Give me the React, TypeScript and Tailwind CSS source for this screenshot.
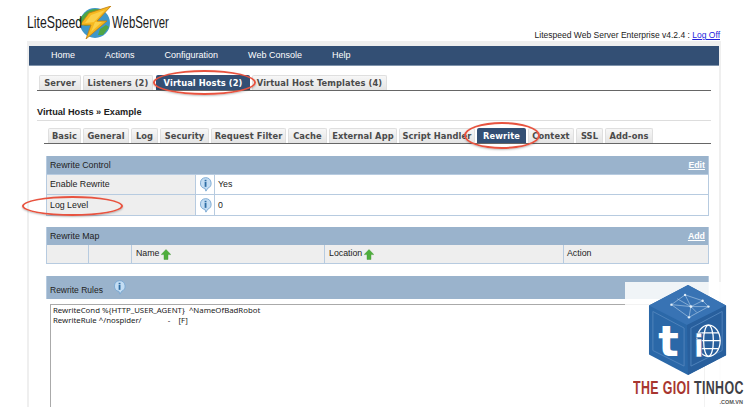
const sans = "font-['Liberation_Sans',Arial,sans-serif]";

const topTabs = [
  { label: "Server", w: "w-[42px]", ml: "ml-0" },
  { label: "Listeners (2)", w: "w-[70px]", ml: "ml-[2px]" },
  { label: "Virtual Hosts (2)", w: "w-[94px]", ml: "ml-[3px]", active: true },
  { label: "Virtual Host Templates (4)", w: "w-[135px]", ml: "ml-[2px]" },
];

const subTabs = [
  { label: "Basic", w: "w-[33px]", ml: "ml-0" },
  { label: "General", w: "w-[46px]", ml: "ml-[2px]" },
  { label: "Log", w: "w-[27px]", ml: "ml-[2px]" },
  { label: "Security", w: "w-[49px]", ml: "ml-[2px]" },
  { label: "Request Filter", w: "w-[75px]", ml: "ml-[2px]" },
  { label: "Cache", w: "w-[39px]", ml: "ml-[2px]" },
  { label: "External App", w: "w-[68px]", ml: "ml-[2px]" },
  { label: "Script Handler", w: "w-[76px]", ml: "ml-[2px]" },
  { label: "Rewrite", w: "w-[49px]", ml: "ml-[2px]", active: true },
  { label: "Context", w: "w-[46px]", ml: "ml-[2px]" },
  { label: "SSL", w: "w-[27px]", ml: "ml-[2px]" },
  { label: "Add-ons", w: "w-[48px]", ml: "ml-[2px]" },
];

function Tab({ label, w, ml, active }: { label: string; w: string; ml: string; active?: boolean }) {
  return (
    <div
      className={`${w} ${ml} h-[15px] shrink-0 flex items-center justify-center whitespace-nowrap rounded-t-[2px] pt-[1px] font-['DejaVu_Sans',sans-serif] text-[8.3px] font-bold tracking-[0.1px] ${
        active
          ? "bg-[#334f74] text-white"
          : "border border-b-0 border-[#dfdfdf] bg-gradient-to-b from-[#f7f7f7] to-[#e4e4e4] text-[#4a4a4a]"
      }`}
    >
      {label}
    </div>
  );
}

function InfoIcon() {
  return (
    <svg width="13" height="15" viewBox="0 0 12 14" className="shrink-0">
      <path d="M6 .6a5.2 5.2 0 0 1 2 10l-1.6 2.6-.9-2.5A5.1 5.1 0 0 1 6 .6z" fill="#c4ddf3" stroke="#7aa9d3" strokeWidth=".9" />
      <rect x="5.2" y="4.6" width="1.7" height="4.6" fill="#2f6ea5" />
      <rect x="5.2" y="2.6" width="1.7" height="1.4" fill="#2f6ea5" />
    </svg>
  );
}

function UpArrow() {
  return (
    <svg width="10" height="11" viewBox="0 0 10 11" className="shrink-0">
      <path d="M5 .5 9.8 5.6H7V10.5H3V5.6H.2z" fill="#4fae3c" stroke="#3d9430" strokeWidth=".4" />
    </svg>
  );
}

function SectionHeader({ title, action, h }: { title: string; action?: string; h: string }) {
  return (
    <div className={`${h} flex items-center justify-between bg-[#9ab3cc] pl-[3px] pr-[3px] pt-[1px] text-[8.8px] text-[#222]`}>
      <span>{title}</span>
      {action && <span className="font-bold text-white underline">{action}</span>}
    </div>
  );
}

function ControlRow({ label, value, h }: { label: string; value: string; h: string }) {
  return (
    <div className={`${h} flex border-t border-[#b7cbe0] text-[8.8px] text-[#222]`}>
      <div className="w-[148px] flex items-center bg-[#eeeeee] pl-[3px] pt-[1px]">{label}</div>
      <div className="w-[20px] flex items-center justify-center border-x border-[#b7cbe0]">
        <InfoIcon />
      </div>
      <div className="flex-1 flex items-center pl-[3px] pt-[1px]">{value}</div>
    </div>
  );
}

function Ring({ className }: { className: string }) {
  return (
    <div
      className={`absolute rounded-[50%] border-[2px] border-[#e8533f] shadow-[0_1px_2px_rgba(0,0,0,0.25)] ${className}`}
    />
  );
}

function Logo() {
  return (
    <svg width="34" height="33" viewBox="0 0 34 33" className="shrink-0">
      <circle cx="17" cy="17" r="15" fill="#3f97c9" />
      <path d="M7 7c5-4 11-5 15-3l3 5-8 4-4 6-6 1-7-6zM22 23l6-4 3 2-6 8-5 0z" fill="#4fa544" />
      <path d="M33 0 11 7 2 19l11 0-5 14 21-18-10 0z" fill="#f6b81e" stroke="#c07d10" strokeWidth=".8" />
      <path d="M27 4 13 9 7 17l10-1-4 10 11-10-8 0z" fill="#fbd04a" />
    </svg>
  );
}

function Cube() {
  return (
    <svg width="80" height="90" viewBox="0 0 82 92" className="block">
      <path d="M41 0 80 21V72L41 92 1 71V21z" fill="#2b68a8" />
      <path d="M41 0 80 21 40 41 1 21z" fill="#3873b4" />
      <path d="M40 41 80 21V72L41 92z" fill="#285f9d" />
      <path d="M5 27 37 44V83L5 67z" fill="none" stroke="#4f83bb" strokeWidth="1" />
      <path d="M44 44 76 27V67L44 83z" fill="none" stroke="#4f83bb" strokeWidth="1" />
      <g stroke="#b9d2ea" strokeWidth=".6" fill="none">
        <path d="M24 20 38 10 56 16 62 22 42 33 24 20zM38 10 44 22 56 16M44 22 24 20M44 22 42 33M44 22 62 22M30 14 44 22M50 28 44 22" />
      </g>
      <g fill="#e4eff9">
        <circle cx="38" cy="10" r="1.2" />
        <circle cx="44" cy="22" r="1.4" />
        <circle cx="56" cy="16" r="1.2" />
        <circle cx="24" cy="20" r="1.2" />
        <circle cx="62" cy="22" r="1.2" />
        <circle cx="42" cy="33" r="1.2" />
      </g>
      <text x="21" y="73" textAnchor="middle" fill="#ffffff" fontFamily="'DejaVu Sans',sans-serif" fontWeight="700" fontSize="44">
        t
      </text>
      <g stroke="#ffffff" strokeWidth="1.3" fill="none">
        <ellipse cx="62" cy="57" rx="12" ry="16" />
        <ellipse cx="62" cy="57" rx="5" ry="16" />
        <path d="M50 57H74M52 49H72M52 65H72" />
      </g>
      <text x="52" y="74" textAnchor="middle" fill="#ffffff" stroke="#285f9d" strokeWidth=".6" fontFamily="'DejaVu Sans',sans-serif" fontWeight="700" fontSize="32">
        i
      </text>
    </svg>
  );
}

export default function App() {
  return (
    <div className={`relative h-[407px] w-[750px] overflow-hidden bg-white ${sans}`}>
      <div className="flex h-[41px] items-start pl-[27px] pr-[30px]">
        <div className="flex items-center pt-[6px]">
          <span className="inline-block w-[51px] origin-left scale-x-[0.72] whitespace-nowrap text-[17px] leading-[28px] text-[#1a1a1a]">
            LiteSpeed
          </span>
          <Logo />
          <span className="inline-block w-[57px] origin-left scale-x-[0.67] whitespace-nowrap text-[17px] leading-[28px] text-[#1a1a1a]">
            WebServer
          </span>
        </div>
        <div className="ml-auto mt-[29px] whitespace-nowrap text-[8.5px] leading-[12px] text-[#222]">
          Litespeed Web Server Enterprise v4.2.4 : <span className="text-[#2222dd] underline">Log Off</span>
        </div>
      </div>

      <div className="ml-[27px] h-[366px] w-[694px] border-x-2 border-t-[5px] border-[#efefef]">
        <div className="flex h-[20px] items-center gap-[30px] border-b border-[#7f93ab] bg-[#334f74] pl-[22px] text-[9px] text-white">
          <span>Home</span>
          <span>Actions</span>
          <span>Configuration</span>
          <span>Web Console</span>
          <span>Help</span>
        </div>

        <div className="ml-[8px] mr-[8px] mt-[9px] flex h-[16px] border-b-[1.5px] border-[#666] pl-[2px]">
          {topTabs.map((t) => (
            <Tab key={t.label} {...t} />
          ))}
        </div>

        <div className="ml-[8px] mr-[8px] mt-[14px] h-[16px] border-b border-[#dddddd] pt-[1px] text-[9.2px] font-bold leading-[13px] text-[#222]">
          Virtual Hosts » Example
        </div>

        <div className="ml-[15px] mr-[8px] mt-[7px] flex h-[16px] border-b-[1.5px] border-[#666] pl-[4px]">
          {subTabs.map((t) => (
            <Tab key={t.label} {...t} />
          ))}
        </div>

        <div className="ml-[17px] w-[663px]">
          <div className="mt-[12px] border-b border-x border-[#b7cbe0]">
            <SectionHeader title="Rewrite Control" action="Edit" h="h-[18px]" />
            <ControlRow label="Enable Rewrite" value="Yes" h="h-[20px]" />
            <ControlRow label="Log Level" value="0" h="h-[21px]" />
          </div>

          <div className="mt-[11px] border-b border-x border-[#b7cbe0]">
            <SectionHeader title="Rewrite Map" action="Add" h="h-[18px]" />
            <div className="flex h-[18px] bg-[#eeeeee] text-[8.8px] text-[#222]">
              <div className="w-[42px] border-r border-[#b7cbe0]" />
              <div className="w-[43px] border-r border-[#b7cbe0]" />
              <div className="flex w-[193px] items-center gap-[2px] border-r border-[#b7cbe0] pl-[4px]">
                Name <UpArrow />
              </div>
              <div className="flex w-[239px] items-center gap-[2px] border-r border-[#b7cbe0] pl-[4px]">
                Location <UpArrow />
              </div>
              <div className="flex flex-1 items-center pl-[3px]">Action</div>
            </div>
          </div>

          <div className="mt-[12px] h-[23px] border-x border-[#b7cbe0] bg-[#9ab3cc]">
            <div className="flex h-[23px] items-start gap-[10px] pl-[3px] text-[8.5px] text-[#222]">
              <span className="pt-[8px]">Rewrite Rules</span>
              <span className="pt-[4px]">
                <InfoIcon />
              </span>
            </div>
          </div>
          <div className="ml-[4px] mt-[5px] h-[110px] w-[655px] border border-[#aaaaaa] pl-[2px] font-['Noto_Sans',sans-serif] text-[7.8px] leading-[10px] text-[#222] whitespace-pre">
            {"RewriteCond %{HTTP_USER_AGENT}  ^NameOfBadRobot\nRewriteRule ^/nospider/             -    [F]"}
          </div>
        </div>
      </div>

      <Ring className="left-[153px] top-[70px] h-[25px] w-[103px]" />
      <Ring className="left-[464px] top-[122px] h-[27px] w-[76px]" />
      <Ring className="left-[22px] top-[196px] h-[20px] w-[101px]" />

      <div className="absolute left-[625px] top-[282px] h-[125px] w-[125px] bg-white/85">
        <div className="absolute left-[23px] top-[3px]">
          <Cube />
        </div>
        <div className="absolute left-[8px] top-[98px] flex h-[16px] w-[112px] items-center whitespace-nowrap">
          <span className="inline-block origin-left scale-x-[0.69] font-['Liberation_Sans',sans-serif] text-[18px] font-bold leading-[16px] tracking-[0.5px]">
            <span className="text-[#a8362f]">THE GIOI </span>
            <span className="text-[#3f3f46]">TINHOC</span>
          </span>
        </div>
        <div className="absolute right-[7px] top-[117px] text-[5.5px] font-bold leading-[6px] text-[#555]">.COM.VN</div>
      </div>
    </div>
  );
}
